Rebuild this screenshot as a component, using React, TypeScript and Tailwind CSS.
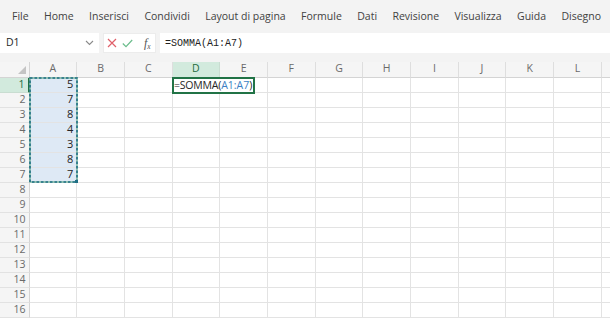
import React from "react";

const menu = [
  "File",
  "Home",
  "Inserisci",
  "Condividi",
  "Layout di pagina",
  "Formule",
  "Dati",
  "Revisione",
  "Visualizza",
  "Guida",
  "Disegno",
];

const cols = ["A", "B", "C", "D", "E", "F", "G", "H", "I", "J", "K", "L"];
const values: Record<number, string> = { 1: "5", 2: "7", 3: "8", 4: "4", 5: "3", 6: "8", 7: "7" };

function App() {
  const rows = Array.from({ length: 16 }, (_, i) => i + 1);

  return (
    <div
      className="w-[610px] h-[318px] overflow-hidden bg-[#f3f3f3] text-[#262626]"
      style={{ fontFamily: '"Open Sans", "Noto Sans", sans-serif' }}
    >
      {/* menu */}
      <div className="h-[33px] flex items-center pl-[12px] gap-[15.4px] text-[10.5px] text-[#424242]">
        {menu.map((m) => (
          <span key={m} className="whitespace-nowrap">
            {m}
          </span>
        ))}
      </div>

      {/* formula bar */}
      <div className="h-[20px] flex items-stretch bg-white">
        <div className="w-[99px] flex items-center justify-between pl-[6px] pr-[5px] text-[10.5px]">
          <span>D1</span>
          <svg width="9" height="6" viewBox="0 0 9 6">
            <path d="M1 1l3.5 3.5L8 1" fill="none" stroke="#8a8a8a" strokeWidth="1.1" />
          </svg>
        </div>
        <div className="w-[4px] bg-[#f3f3f3]" />
        <div className="w-[53px] flex items-center gap-[5px] pl-[3px] border border-[#ececec]">
          <svg width="10" height="10" viewBox="0 0 10 10">
            <path d="M1 1l8 8M9 1l-8 8" stroke="#e0606a" strokeWidth="1.2" />
          </svg>
          <svg width="11" height="9" viewBox="0 0 11 9">
            <path d="M0.8 4.5l3.2 3.2L10.2 1" fill="none" stroke="#6bbd8c" strokeWidth="1.2" />
          </svg>
          <span
            className="ml-[6px] text-[12px] italic text-[#555]"
            style={{ fontFamily: '"Liberation Serif", serif' }}
          >
            f<sub className="text-[7.5px]">x</sub>
          </span>
        </div>
        <div className="w-[4px] bg-[#f3f3f3]" />
        <div
          className="flex-1 flex items-center pl-[5px] text-[10px] text-[#222]"
          style={{ fontFamily: '"Liberation Mono", monospace' }}
        >
          =SOMMA(A1:A7)
        </div>
      </div>

      <div className="h-[9px]" />

      {/* sheet */}
      <div className="relative bg-white">
        <div className="grid grid-cols-[29.5px_repeat(12,47.7px)_1fr] grid-rows-[15.5px_repeat(16,15px)] text-[11px]">
          {/* header corner */}
          <div className="bg-[#f5f5f5] border-r border-b border-[#d4d4d4] relative">
            <svg className="absolute right-[3px] bottom-[3px]" width="8" height="8" viewBox="0 0 8 8">
              <path d="M8 0L8 8L0 8Z" fill="#c4c4c4" />
            </svg>
          </div>
          {cols.map((c) => (
            <div
              key={c}
              className={`flex items-center justify-center text-[10.5px] border-b ${
                c === "D"
                  ? "bg-[#d2eadd] border-b-[#217346] text-[#1e6b41] border-r border-r-[#c9ddd1]"
                  : "bg-[#f5f5f5] border-b-[#d4d4d4] text-[#6a6a6a] border-r border-r-[#dedede]"
              }`}
            >
              {c}
            </div>
          ))}
          <div className="bg-[#f5f5f5] border-b border-[#d4d4d4]" />

          {rows.map((r) => (
            <React.Fragment key={r}>
              <div
                className={`flex items-center justify-end pr-[3px] text-[10.5px] border-b ${
                  r === 1
                    ? "bg-[#d2eadd] text-[#1e6b41] border-r-2 border-r-[#217346] border-b-[#c9ddd1]"
                    : "bg-[#f5f5f5] text-[#6a6a6a] border-r border-r-[#d4d4d4] border-b-[#e2e2e2]"
                }`}
              >
                {r}
              </div>
              {cols.map((c) => (
                <div
                  key={c}
                  className={`flex items-center justify-end pr-[3px] border-r border-b border-[#e3e3e3] ${
                    c === "A" && r <= 7 ? "bg-[#dee9f5]" : ""
                  }`}
                >
                  {c === "A" && values[r]}
                </div>
              ))}
              <div className="border-b border-[#e3e3e3]" />
            </React.Fragment>
          ))}
        </div>

        {/* reference range A1:A7 (marching ants) */}
        <svg
          className="absolute left-[29px] top-[15px] pointer-events-none"
          width="49"
          height="106"
          viewBox="0 0 49 106"
        >
          <rect x="1" y="1" width="47" height="104" fill="none" stroke="#7fb8a6" strokeWidth="1.6" />
          <rect
            x="1"
            y="1"
            width="47"
            height="104"
            fill="none"
            stroke="#1f6f85"
            strokeWidth="1.6"
            strokeDasharray="2.5 2"
          />
          <rect x="46" y="103" width="3" height="3" fill="#1f6f85" />
        </svg>

        {/* editing cell */}
        <div className="absolute left-[172px] top-[15px] w-[83px] h-[17px] border-2 border-[#217346] bg-white flex items-center text-[10.5px] leading-none">
          <span className="tracking-[-0.2px]">=SOMMA(</span>
          <span className="text-[#3b7fc4]">A1:A7</span>
          <span>)</span>
        </div>
      </div>
    </div>
  );
}

export default App;
